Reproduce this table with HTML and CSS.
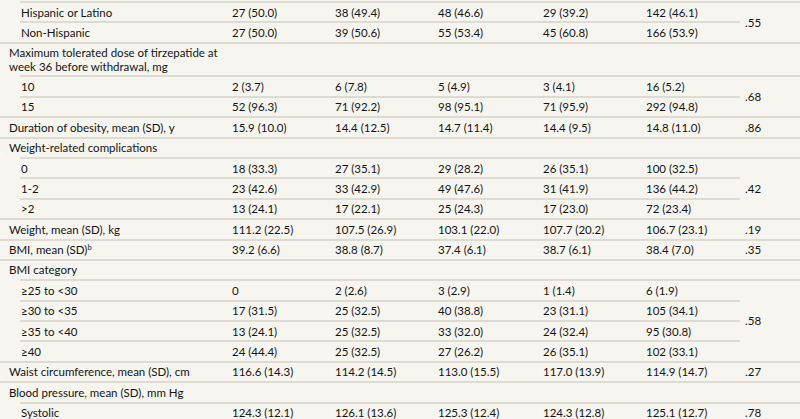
FILE: index.html
```html
<!DOCTYPE html>
<html lang="en">
<head>
<meta charset="utf-8">
<title>Baseline characteristics</title>
<link rel="stylesheet" href="styles.css">
</head>
<body>
<table class="data">
  <colgroup>
    <col class="c-label"><col class="c-v1"><col class="c-v2"><col class="c-v3"><col class="c-v4"><col class="c-v5"><col class="c-p">
  </colgroup>
  <tbody>
    <tr class="first">
      <td class="label sub ind">Hispanic or Latino</td><td>27 (50.0)</td><td>38 (49.4)</td><td>48 (46.6)</td><td>29 (39.2)</td><td>142 (46.1)</td><td class="p" rowspan="2">.55</td>
    </tr>
    <tr>
      <td class="label sub">Non-Hispanic</td><td>27 (50.0)</td><td>39 (50.6)</td><td>55 (53.4)</td><td>45 (60.8)</td><td>166 (53.9)</td>
    </tr>
    <tr>
      <td class="label ind">Maximum tolerated dose of tirzepatide at week 36 before withdrawal, mg</td><td></td><td></td><td></td><td></td><td></td><td></td>
    </tr>
    <tr>
      <td class="label sub ind">10</td><td>2 (3.7)</td><td>6 (7.8)</td><td>5 (4.9)</td><td>3 (4.1)</td><td>16 (5.2)</td><td class="p" rowspan="2">.68</td>
    </tr>
    <tr>
      <td class="label sub">15</td><td>52 (96.3)</td><td>71 (92.2)</td><td>98 (95.1)</td><td>71 (95.9)</td><td>292 (94.8)</td>
    </tr>
    <tr>
      <td class="label">Duration of obesity, mean (SD), y</td><td>15.9 (10.0)</td><td>14.4 (12.5)</td><td>14.7 (11.4)</td><td>14.4 (9.5)</td><td>14.8 (11.0)</td><td class="p">.86</td>
    </tr>
    <tr>
      <td class="label ind">Weight-related complications</td><td></td><td></td><td></td><td></td><td></td><td></td>
    </tr>
    <tr>
      <td class="label sub ind">0</td><td>18 (33.3)</td><td>27 (35.1)</td><td>29 (28.2)</td><td>26 (35.1)</td><td>100 (32.5)</td><td class="p" rowspan="3">.42</td>
    </tr>
    <tr>
      <td class="label sub ind">1-2</td><td>23 (42.6)</td><td>33 (42.9)</td><td>49 (47.6)</td><td>31 (41.9)</td><td>136 (44.2)</td>
    </tr>
    <tr>
      <td class="label sub">&gt;2</td><td>13 (24.1)</td><td>17 (22.1)</td><td>25 (24.3)</td><td>17 (23.0)</td><td>72 (23.4)</td>
    </tr>
    <tr>
      <td class="label">Weight, mean (SD), kg</td><td>111.2 (22.5)</td><td>107.5 (26.9)</td><td>103.1 (22.0)</td><td>107.7 (20.2)</td><td>106.7 (23.1)</td><td class="p">.19</td>
    </tr>
    <tr>
      <td class="label">BMI, mean (SD)<sup>b</sup></td><td>39.2 (6.6)</td><td>38.8 (8.7)</td><td>37.4 (6.1)</td><td>38.7 (6.1)</td><td>38.4 (7.0)</td><td class="p">.35</td>
    </tr>
    <tr>
      <td class="label ind">BMI category</td><td></td><td></td><td></td><td></td><td></td><td></td>
    </tr>
    <tr>
      <td class="label sub ind">≥25 to &lt;30</td><td>0</td><td>2 (2.6)</td><td>3 (2.9)</td><td>1 (1.4)</td><td>6 (1.9)</td><td class="p" rowspan="4">.58</td>
    </tr>
    <tr>
      <td class="label sub ind">≥30 to &lt;35</td><td>17 (31.5)</td><td>25 (32.5)</td><td>40 (38.8)</td><td>23 (31.1)</td><td>105 (34.1)</td>
    </tr>
    <tr>
      <td class="label sub ind">≥35 to &lt;40</td><td>13 (24.1)</td><td>25 (32.5)</td><td>33 (32.0)</td><td>24 (32.4)</td><td>95 (30.8)</td>
    </tr>
    <tr>
      <td class="label sub">≥40</td><td>24 (44.4)</td><td>25 (32.5)</td><td>27 (26.2)</td><td>26 (35.1)</td><td>102 (33.1)</td>
    </tr>
    <tr>
      <td class="label">Waist circumference, mean (SD), cm</td><td>116.6 (14.3)</td><td>114.2 (14.5)</td><td>113.0 (15.5)</td><td>117.0 (13.9)</td><td>114.9 (14.7)</td><td class="p">.27</td>
    </tr>
    <tr>
      <td class="label ind">Blood pressure, mean (SD), mm Hg</td><td></td><td></td><td></td><td></td><td></td><td></td>
    </tr>
    <tr>
      <td class="label sub ind">Systolic</td><td>124.3 (12.1)</td><td>126.1 (13.6)</td><td>125.3 (12.4)</td><td>124.3 (12.8)</td><td>125.1 (12.7)</td><td class="p">.78</td>
    </tr>
  </tbody>
</table>
</body>
</html>
```

FILE: styles.css
```css
html, body {
  margin: 0;
  padding: 0;
  background: #f6f5ef;
}

body {
  padding-top: 1px;
  font-family: Lato, "Liberation Sans", sans-serif;
  font-size: 11.5px;
  color: #141414;
}

.data {
  width: 800px;
  border-collapse: separate;
  border-spacing: 0;
  table-layout: fixed;
}

.c-label { width: 232px; }
.c-v1 { width: 103px; }
.c-v2 { width: 103px; }
.c-v3 { width: 105px; }
.c-v4 { width: 103px; }
.c-v5 { width: 94px; }
.c-p { width: 60px; }

.data td {
  padding: 2.6px 0;
  line-height: 13.2px;
  border-bottom: 2px solid #dedcd2;
  vertical-align: middle;
  white-space: nowrap;
}

.data td.label {
  padding-left: 9px;
  padding-right: 10px;
  white-space: normal;
}

.data td.sub {
  padding-left: 21px;
}

.data td.ind {
  border-bottom-color: transparent;
  background-image: linear-gradient(#dedcd2, #dedcd2);
  background-origin: border-box;
  background-repeat: no-repeat;
  background-size: calc(100% - 20px) 2px;
  background-position: 20px 100%;
}

.data td.p {
  padding-left: 5px;
}

.first td {
  border-top: 2px solid #dedcd2;
}

.first td.ind {
  border-top-color: transparent;
  background-image: linear-gradient(#dedcd2, #dedcd2), linear-gradient(#dedcd2, #dedcd2);
  background-size: calc(100% - 20px) 2px, calc(100% - 20px) 2px;
  background-position: 20px 100%, 20px 0;
}

sup {
  font-size: 7.5px;
  line-height: 0;
  vertical-align: 4px;
}
```
